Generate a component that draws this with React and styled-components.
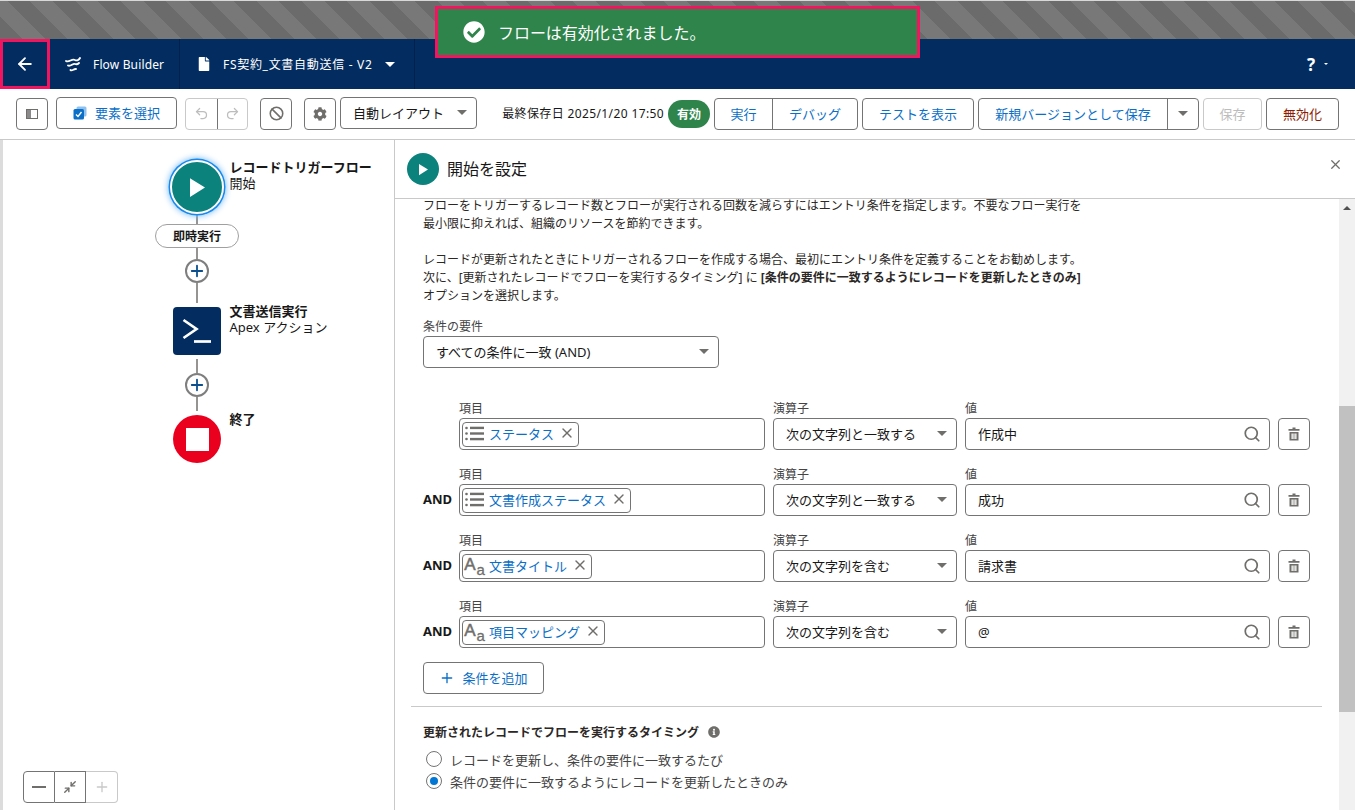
import styled, { createGlobalStyle } from "styled-components";
import { ArrowLeft, Undo2, Redo2, Ban, Search, Plus, X, Minimize2 } from "lucide-react";
import { FaCheckCircle, FaCog, FaFile, FaInfoCircle } from "react-icons/fa";

const GlobalStyle = createGlobalStyle`
  html, body { margin: 0; padding: 0; background: #fff; }
  body { font-family: "Noto Sans", "Noto Sans CJK JP", sans-serif; color: #181818; font-size: 13px; }
  * { box-sizing: border-box; }
`;

const BLUE = "#0b6fc7";
const LINE = "#747474";

const Page = styled.div`
  position: relative;
  width: 1355px;
  height: 810px;
  overflow: hidden;
  display: flex;
  flex-direction: column;
`;

const StripeBand = styled.div`
  height: 39px;
  border-top: 1px solid #d8d8d8;
  background: repeating-linear-gradient(45deg, #6b6b6b 0 16px, #787878 16px 32px);
`;

const Toast = styled.div`
  position: absolute;
  left: 435px;
  top: 6px;
  width: 485px;
  height: 52px;
  border: 3px solid #f2145f;
  background: #2e844a;
  color: #fff;
  display: flex;
  align-items: center;
  padding-left: 25px;
  font-size: 16px;
  gap: 13px;
  letter-spacing: -0.05px;
`;

const NavBar = styled.div`
  height: 50px;
  background: #032d60;
  color: #fff;
  display: flex;
  align-items: stretch;
`;

const BackButton = styled.div`
  width: 50px;
  border: 3px solid #f2145f;
  display: flex;
  align-items: center;
  justify-content: center;
`;

const NavSection = styled.div`
  width: ${(p) => p.$w}px;
  border-right: 1px solid #01204a;
  display: flex;
  align-items: center;
  padding-left: ${(p) => p.$pl}px;
  gap: ${(p) => p.$gap}px;
  font-size: 12px;
  letter-spacing: ${(p) => p.$track || 0}px;
`;

const NavHelp = styled.div`
  margin-left: auto;
  padding-right: 27px;
  display: flex;
  align-items: center;
  gap: 9px;
  font-size: 17px;
  font-weight: 700;
`;

const Caret = styled.span`
  display: inline-block;
  width: 0;
  height: 0;
  border-left: ${(p) => p.$s}px solid transparent;
  border-right: ${(p) => p.$s}px solid transparent;
  border-top: ${(p) => p.$s}px solid ${(p) => p.$c || "#706e6b"};
  flex: none;
`;

const Toolbar = styled.div`
  height: 51px;
  border-bottom: 1px solid #c9c9c9;
  display: flex;
  align-items: flex-start;
  padding: 8px 16px 0 16px;
`;

const ToolButton = styled.div`
  height: 32px;
  width: ${(p) => (p.$w ? `${p.$w}px` : "auto")};
  margin-left: ${(p) => p.$ml || 0}px;
  margin-top: ${(p) => (p.$high ? 0 : 1)}px;
  padding-bottom: 1px;
  border: 1px solid ${LINE};
  border-radius: 4px;
  background: #fff;
  display: flex;
  align-items: center;
  justify-content: center;
  gap: 8px;
  color: ${(p) => p.$color || BLUE};
  font-size: 13px;
  flex: none;
`;

const DisabledButton = styled(ToolButton)`
  border-color: #c9c9c9;
  color: #bdbdbd;
`;

const ButtonGroup = styled.div`
  display: flex;
  height: 32px;
  margin-top: 1px;
  margin-left: ${(p) => p.$ml || 0}px;
  border: 1px solid ${(p) => (p.$off ? "#c9c9c9" : LINE)};
  border-radius: 4px;
  flex: none;
`;

const GroupCell = styled.div`
  width: ${(p) => p.$w}px;
  padding-bottom: 1px;
  display: flex;
  align-items: center;
  justify-content: center;
  color: ${BLUE};
  font-size: 13px;
  & + & { border-left: 1px solid ${(p) => (p.$off ? "#c9c9c9" : LINE)}; }
`;

const LayoutSelect = styled.div`
  width: 137px;
  height: 32px;
  margin-left: 4px;
  border: 1px solid ${LINE};
  border-radius: 4px;
  display: flex;
  align-items: center;
  justify-content: space-between;
  padding: 0 9px 1px 12px;
  font-size: 13px;
`;

const SavedText = styled.div`
  margin-left: auto;
  height: 32px;
  display: flex;
  align-items: center;
  font-size: 12px;
  letter-spacing: 0.38px;
  white-space: nowrap;
  margin-right: 4px;
`;

const ActiveBadge = styled.div`
  width: 42px;
  height: 28px;
  margin: 3px 4px 0 0;
  padding-bottom: 1px;
  border-radius: 14px;
  background: #2e844a;
  color: #fff;
  font-size: 12px;
  font-weight: 700;
  display: flex;
  align-items: center;
  justify-content: center;
  flex: none;
`;

const Body = styled.div`
  flex: 1;
  display: flex;
  min-height: 0;
`;

const Canvas = styled.div`
  position: relative;
  width: 394px;
  flex: none;
  border-left: 3px solid #dcdcdc;
  padding: 20px 0 0 170px;
`;

const FlowColumn = styled.div`
  width: 48px;
  display: flex;
  flex-direction: column;
  align-items: center;
`;

const Node = styled.div`
  position: relative;
  width: 48px;
  height: ${(p) => p.$h || 48}px;
  margin-top: ${(p) => p.$mt || 0}px;
  display: flex;
  justify-content: center;
  align-items: center;
  flex: none;
`;

const NodeLabel = styled.div`
  position: absolute;
  left: 56.5px;
  top: ${(p) => p.$top}px;
  white-space: nowrap;
  font-size: 13px;
  line-height: 16px;
  strong { display: block; font-size: 13px; font-weight: 700; }
`;

const StartCircle = styled.div`
  width: 54px;
  height: 54px;
  flex: none;
  border-radius: 50%;
  background: #0b827c;
  border: 2px solid #fff;
  box-shadow: 0 0 0 1.5px #1589ee, 0 0 6px 2px #7fbef5;
  display: flex;
  align-items: center;
  justify-content: center;
`;

const ApexBox = styled.div`
  width: 48px;
  height: 48px;
  border-radius: 4px;
  background: #032d60;
  display: flex;
  align-items: center;
  justify-content: center;
`;

const StopCircle = styled.div`
  width: 48px;
  height: 48px;
  border-radius: 50%;
  background: #ea001e;
  display: flex;
  align-items: center;
  justify-content: center;
  &::after { content: ""; width: 23px; height: 23px; background: #fff; }
`;

const Connector = styled.div`
  width: 2px;
  height: ${(p) => p.$h}px;
  margin-top: ${(p) => p.$mt || 0}px;
  background: #969492;
  flex: none;
`;

const Pill = styled.div`
  width: 84px;
  height: 24px;
  flex: none;
  border: 1px solid #a0a0a0;
  border-radius: 12px;
  background: #fff;
  font-size: 12px;
  font-weight: 700;
  display: flex;
  align-items: center;
  justify-content: center;
`;

const AddCircle = styled.div`
  width: 24px;
  height: 24px;
  flex: none;
  border: 2px solid #7e7e7e;
  border-radius: 50%;
  background: #fff;
  color: #0b4f8f;
  display: flex;
  align-items: center;
  justify-content: center;
`;

const ZoomControls = styled.div`
  position: absolute;
  left: 20px;
  bottom: 7px;
  display: flex;
  height: 32px;
`;

const ZoomCell = styled.div`
  width: ${(p) => p.$w}px;
  border: 1px solid ${(p) => (p.$off ? "#c9c9c9" : LINE)};
  border-left-width: ${(p) => (p.$first ? 1 : 0)}px;
  border-radius: ${(p) => p.$r};
  color: ${(p) => (p.$off ? "#c9c9c9" : "#706e6b")};
  display: flex;
  align-items: center;
  justify-content: center;
`;

const Minus = styled.span`
  width: 14px;
  height: 2px;
  background: #706e6b;
`;

const Panel = styled.div`
  flex: 1;
  min-width: 0;
  border-left: 1px solid #c9c9c9;
  display: flex;
  flex-direction: column;
`;

const PanelHeader = styled.div`
  position: relative;
  height: 59px;
  flex: none;
  border-bottom: 1px solid #c9c9c9;
  display: flex;
  align-items: center;
  padding: 0 0 0 12px;
  gap: 8px;
  font-size: 16px;
`;

const PanelTitle = styled.span`
  padding-bottom: 2px;
`;

const HeaderIcon = styled.div`
  width: 32px;
  height: 32px;
  border-radius: 50%;
  background: #0b827c;
  display: flex;
  align-items: center;
  justify-content: center;
`;

const CloseButton = styled.div`
  position: absolute;
  right: 12px;
  top: 17px;
  color: #706e6b;
  display: flex;
`;

const ScrollArea = styled.div`
  flex: 1;
  min-height: 0;
  display: flex;
`;

const Content = styled.div`
  flex: 1;
  min-width: 0;
  padding: 0 0 0 28px;
`;

const Help = styled.div`
  margin-top: -2px;
  font-size: 12px;
  line-height: 18px;
  white-space: nowrap;
  color: #2b2826;
  strong { font-weight: 700; }
`;

const Label = styled.div`
  height: 16px;
  line-height: 16px;
  margin-bottom: 1px;
  font-size: 12px;
  color: #444;
  white-space: nowrap;
`;

const LogicField = styled.div`
  margin-top: 14px;
`;

const SelectBox = styled.div`
  width: ${(p) => (p.$w ? `${p.$w}px` : "auto")};
  height: 32px;
  border: 1px solid ${LINE};
  border-radius: 4px;
  display: flex;
  align-items: center;
  justify-content: space-between;
  padding: 0 9px 1px 12px;
  font-size: 13px;
  white-space: nowrap;
`;

const Rows = styled.div`
  margin-top: 33px;
  display: flex;
  flex-direction: column;
  gap: 17px;
`;

const Row = styled.div`
  display: grid;
  grid-template-columns: 28px 306px 184px 305px 32px;
  column-gap: 8px;
`;

const AndCell = styled.div`
  align-self: end;
  height: 32px;
  display: flex;
  align-items: center;
  font-size: 13px;
  font-weight: 700;
  padding-bottom: 3px;
`;

const InputBox = styled.div`
  height: 32px;
  border: 1px solid ${LINE};
  border-radius: 4px;
  display: flex;
  align-items: center;
  justify-content: space-between;
  padding: ${(p) => (p.$chip ? "0 0 0 2px" : "0 8px 1px 12px")};
  font-size: 13px;
  color: #706e6b;
`;

const Value = styled.span`
  color: #181818;
`;

const Chip = styled.div`
  height: 25px;
  border: 1px solid ${LINE};
  border-radius: 4px;
  display: flex;
  align-items: center;
  padding: 0 3px 2px 2px;
  color: ${BLUE};
  font-size: 13px;
  white-space: nowrap;
`;

const ChipIcon = styled.span`
  width: 19px;
  margin-right: 5px;
  display: flex;
  align-items: center;
  justify-content: center;
  flex: none;
`;

const ChipClose = styled.span`
  margin-left: 5px;
  display: flex;
  color: #706e6b;
`;

const TypeGlyph = styled.span`
  color: #706e6b;
  font-family: "Liberation Sans", sans-serif;
  line-height: 1;
  display: flex;
  align-items: flex-end;
  margin-bottom: 2px;
  b { font-weight: 400; font-size: 17px; -webkit-text-stroke: 0.5px #706e6b; }
  i { font-style: normal; font-size: 15px; margin-left: 1px; margin-bottom: -4px; -webkit-text-stroke: 0.3px #706e6b; }
`;

const TrashButton = styled.div`
  height: 32px;
  border: 1px solid ${LINE};
  border-radius: 4px;
  display: flex;
  align-items: center;
  justify-content: center;
`;

const AddButton = styled.div`
  width: 121px;
  height: 32px;
  margin-top: 14px;
  padding-bottom: 1px;
  border: 1px solid ${LINE};
  border-radius: 4px;
  color: ${BLUE};
  font-size: 13px;
  display: flex;
  align-items: center;
  justify-content: center;
  gap: 7px;
`;

const Divider = styled.div`
  width: 911px;
  height: 1px;
  margin: 12px 0 0 -12px;
  background: #c9c9c9;
`;

const SectionTitle = styled.div`
  margin-top: 16px;
  height: 18px;
  display: flex;
  align-items: center;
  gap: 9px;
  font-size: 12px;
  font-weight: 700;
  color: #2b2826;
  svg { color: #706e6b; }
`;

const RadioGroup = styled.div`
  margin-top: 7px;
`;

const RadioRow = styled.div`
  height: 22px;
  display: flex;
  align-items: center;
  gap: 8px;
  font-size: 13px;
  padding-left: 3px;
  color: #444;
`;

const RadioDot = styled.span`
  width: 16px;
  height: 16px;
  border-radius: 50%;
  border: 1px solid ${LINE};
  background: #fff;
  display: flex;
  align-items: center;
  justify-content: center;
  flex: none;
  &::after {
    content: "";
    width: 8px;
    height: 8px;
    border-radius: 50%;
    background: ${(p) => (p.$on ? "#0176d3" : "transparent")};
  }
`;

const Scrollbar = styled.div`
  width: 16px;
  flex: none;
  background: #f1f1f1;
  display: flex;
  flex-direction: column;
  align-items: center;
`;

const ScrollUp = styled.div`
  height: 17px;
  display: flex;
  align-items: center;
  justify-content: center;
  &::after {
    content: "";
    border-left: 4px solid transparent;
    border-right: 4px solid transparent;
    border-bottom: 4px solid #505050;
  }
`;

const ScrollThumb = styled.div`
  width: 16px;
  height: 306px;
  margin-top: 190px;
  background: #c1c1c1;
`;

const FlowLogo = () => (
  <svg width="16" height="15" viewBox="0 0 16 15" fill="none" stroke="#fff" strokeWidth="1.9" strokeLinecap="round">
    <path d="M1 4 C4 6 7 1 10 3 C12 4 14 3 15 1" />
    <path d="M3 8.500 C5.500 10 8 6 10 7 C12 8 13 7 14 6" />
    <path d="M5.500 13 C7 14.500 9 11.500 11 12" />
  </svg>
);

const PanelToggle = () => (
  <svg width="12" height="10" viewBox="0 0 12 10">
    <rect x="0.5" y="0.500" width="11" height="9" fill="none" stroke="#706e6b" />
    <rect x="1" y="1" width="4" height="8" fill="#8a8a8a" />
  </svg>
);

const SelectIcon = () => (
  <svg width="14" height="14" viewBox="0 0 14 14">
    <rect x="3.500" y="0.500" width="10" height="10" rx="1.500" fill="#8fc1ee" />
    <rect x="0.500" y="3" width="10.500" height="10.500" rx="1.500" fill="#0b6fc7" />
    <path d="M3 8.500 L5 10.500 L8.500 6" fill="none" stroke="#fff" strokeWidth="1.400" />
  </svg>
);

const PlayIcon = ({ w, h }) => (
  <svg width={w} height={h} viewBox="0 0 16 20">
    <path d="M0 0 L16 10 L0 20 Z" fill="#fff" />
  </svg>
);

const ApexIcon = () => (
  <svg width="32" height="32" viewBox="0 0 32 32" fill="none" stroke="#fff" strokeWidth="2.7">
    <path d="M2.500 5 L15.500 14 L2.500 23" />
    <path d="M13 26.500 L30 26.500" />
  </svg>
);

const ListIcon = () => (
  <svg width="19" height="15" viewBox="0 0 19 15" fill="#706e6b">
    <circle cx="1.500" cy="2" r="1.300" />
    <circle cx="1.500" cy="7.500" r="1.300" />
    <circle cx="1.500" cy="13" r="1.300" />
    <rect x="5" y="0.700" width="14" height="2.400" />
    <rect x="5" y="6.300" width="14" height="2.400" />
    <rect x="5" y="11.900" width="14" height="2.400" />
  </svg>
);

const TextIcon = () => (
  <TypeGlyph>
    <b>A</b>
    <i>a</i>
  </TypeGlyph>
);

const TrashIcon = () => (
  <svg width="12" height="14" viewBox="0 0 12 14" fill="#706e6b">
    <path d="M4.500 0.500 H7.500 V2 H11.500 V3.800 H0.500 V2 H4.500 Z" />
    <path fillRule="evenodd" d="M1.500 5 H10.500 V13.500 H1.500 Z M3.500 6.500 V12 H4.800 V6.500 Z M5.400 6.500 V12 H6.600 V6.500 Z M7.200 6.500 V12 H8.500 V6.500 Z" />
  </svg>
);

const conditions = [
  { name: "ステータス", type: "list", op: "次の文字列と一致する", value: "作成中" },
  { name: "文書作成ステータス", type: "list", op: "次の文字列と一致する", value: "成功", and: true },
  { name: "文書タイトル", type: "text", op: "次の文字列を含む", value: "請求書", and: true },
  { name: "項目マッピング", type: "text", op: "次の文字列を含む", value: "@", and: true },
];

const ConditionRow = ({ name, type, op, value, and }) => (
  <Row>
    <AndCell>{and && "AND"}</AndCell>
    <div>
      <Label>項目</Label>
      <InputBox $chip>
        <Chip>
          <ChipIcon>{type === "list" ? <ListIcon /> : <TextIcon />}</ChipIcon>
          {name}
          <ChipClose>
            <X size={16} strokeWidth={2} />
          </ChipClose>
        </Chip>
      </InputBox>
    </div>
    <div>
      <Label>演算子</Label>
      <SelectBox>
        {op}
        <Caret $s={5} />
      </SelectBox>
    </div>
    <div>
      <Label>値</Label>
      <InputBox>
        <Value>{value}</Value>
        <Search size={18} strokeWidth={2.3} />
      </InputBox>
    </div>
    <div>
      <Label>&nbsp;</Label>
      <TrashButton>
        <TrashIcon />
      </TrashButton>
    </div>
  </Row>
);

const App = () => (
  <Page>
    <GlobalStyle />
    <StripeBand />
    <Toast>
      <FaCheckCircle size={22} />
      フローは有効化されました。
    </Toast>
    <NavBar>
      <BackButton>
        <ArrowLeft size={20} strokeWidth={2.2} />
      </BackButton>
      <NavSection $w={130} $pl={15} $gap={12} $track={0.15}>
        <FlowLogo />
        Flow Builder
      </NavSection>
      <NavSection $w={235} $pl={17} $gap={12} $track={0.7}>
        <FaFile size={14} />
        FS契約_文書自動送信 - V2
        <Caret $s={5.5} $c="#fff" />
      </NavSection>
      <NavHelp>
        ?
        <Caret $s={2.5} $c="#fff" />
      </NavHelp>
    </NavBar>
    <Toolbar>
      <ToolButton $w={32}>
        <PanelToggle />
      </ToolButton>
      <ToolButton $w={121} $ml={8} $high>
        <SelectIcon />
        要素を選択
      </ToolButton>
      <ButtonGroup $ml={8} $off>
        <GroupCell $w={30.5} $off>
          <Undo2 size={15} color="#bdbdbd" />
        </GroupCell>
        <GroupCell $w={30.5} $off>
          <Redo2 size={15} color="#bdbdbd" />
        </GroupCell>
      </ButtonGroup>
      <ToolButton $w={32} $ml={12} $color="#706e6b">
        <Ban size={15} strokeWidth={2.5} />
      </ToolButton>
      <ToolButton $w={32} $ml={12} $color="#706e6b">
        <FaCog size={14} />
      </ToolButton>
      <LayoutSelect>
        自動レイアウト
        <Caret $s={5} />
      </LayoutSelect>
      <SavedText>最終保存日 2025/1/20 17:50</SavedText>
      <ActiveBadge>有効</ActiveBadge>
      <ButtonGroup>
        <GroupCell $w={57}>実行</GroupCell>
        <GroupCell $w={85}>デバッグ</GroupCell>
      </ButtonGroup>
      <ToolButton $w={112} $ml={4}>テストを表示</ToolButton>
      <ButtonGroup $ml={4}>
        <GroupCell $w={188}>新規バージョンとして保存</GroupCell>
        <GroupCell $w={31}>
          <Caret $s={5} />
        </GroupCell>
      </ButtonGroup>
      <DisabledButton $w={59} $ml={4}>保存</DisabledButton>
      <ToolButton $w={73} $ml={4} $color="#8e1b03">無効化</ToolButton>
    </Toolbar>
    <Body>
      <Canvas>
        <FlowColumn>
          <Node $h={54}>
            <StartCircle>
              <PlayIcon w={15} h={25} />
            </StartCircle>
            <NodeLabel $top={-1}>
              <strong>レコードトリガーフロー</strong>
              開始
            </NodeLabel>
          </Node>
          <Connector $h={10} />
          <Pill>即時実行</Pill>
          <Connector $h={11} />
          <AddCircle>
            <Plus size={18} strokeWidth={2.4} />
          </AddCircle>
          <Connector $h={20} />
          <Node $mt={4}>
            <ApexBox>
              <ApexIcon />
            </ApexBox>
            <NodeLabel $top={-4}>
              <strong>文書送信実行</strong>
              Apex アクション
            </NodeLabel>
          </Node>
          <Connector $h={14} $mt={4} />
          <AddCircle>
            <Plus size={18} strokeWidth={2.4} />
          </AddCircle>
          <Connector $h={14} />
          <Node $mt={4}>
            <StopCircle />
            <NodeLabel $top={-4}>
              <strong>終了</strong>
            </NodeLabel>
          </Node>
        </FlowColumn>
        <ZoomControls>
          <ZoomCell $w={32} $first $r="4px 0 0 4px">
            <Minus />
          </ZoomCell>
          <ZoomCell $w={31} $r="0">
            <Minimize2 size={14} strokeWidth={2.4} />
          </ZoomCell>
          <ZoomCell $w={32} $off $r="0 4px 4px 0">
            <Plus size={16} />
          </ZoomCell>
        </ZoomControls>
      </Canvas>
      <Panel>
        <PanelHeader>
          <HeaderIcon>
            <PlayIcon w={9} h={13} />
          </HeaderIcon>
          <PanelTitle>開始を設定</PanelTitle>
          <CloseButton>
            <X size={15} />
          </CloseButton>
        </PanelHeader>
        <ScrollArea>
          <Content>
            <Help>
              フローをトリガーするレコード数とフローが実行される回数を減らすにはエントリ条件を指定します。不要なフロー実行を
              <br />
              最小限に抑えれば、組織のリソースを節約できます。
              <br />
              <br />
              レコードが更新されたときにトリガーされるフローを作成する場合、最初にエントリ条件を定義することをお勧めします。
              <br />
              次に、[更新されたレコードでフローを実行するタイミング] に <strong>[条件の要件に一致するようにレコードを更新したときのみ]</strong>
              <br />
              オプションを選択します。
            </Help>
            <LogicField>
              <Label>条件の要件</Label>
              <SelectBox $w={296}>
                すべての条件に一致 (AND)
                <Caret $s={5} />
              </SelectBox>
            </LogicField>
            <Rows>
              {conditions.map((c) => (
                <ConditionRow key={c.name} {...c} />
              ))}
            </Rows>
            <AddButton>
              <Plus size={16} />
              条件を追加
            </AddButton>
            <Divider />
            <SectionTitle>
              更新されたレコードでフローを実行するタイミング
              <FaInfoCircle size={12} />
            </SectionTitle>
            <RadioGroup>
              <RadioRow>
                <RadioDot />
                レコードを更新し、条件の要件に一致するたび
              </RadioRow>
              <RadioRow>
                <RadioDot $on />
                条件の要件に一致するようにレコードを更新したときのみ
              </RadioRow>
            </RadioGroup>
          </Content>
          <Scrollbar>
            <ScrollUp />
            <ScrollThumb />
          </Scrollbar>
        </ScrollArea>
      </Panel>
    </Body>
  </Page>
);

export default App;
